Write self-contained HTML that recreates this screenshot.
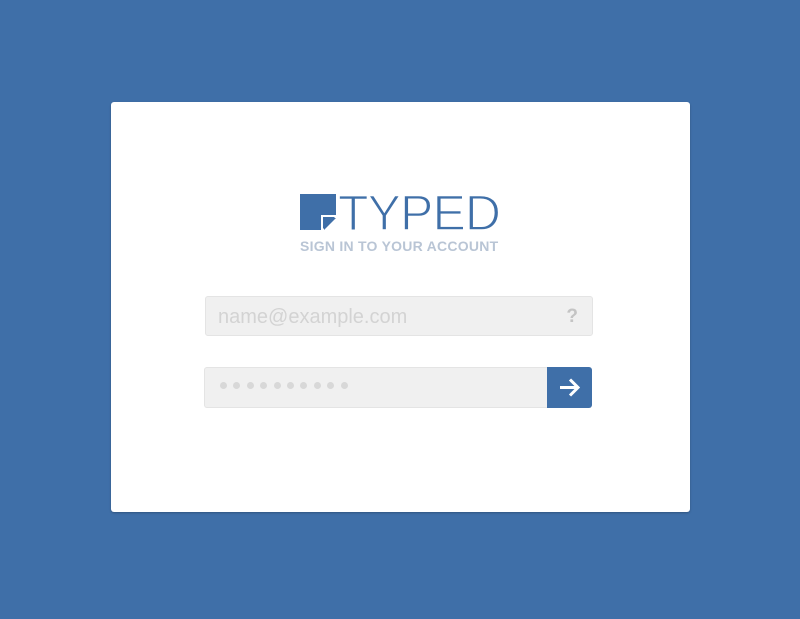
<!DOCTYPE html>
<html><head><style>
body{margin:0;width:800px;height:619px;background:#3f6fa8;position:relative;overflow:hidden;font-family:"Liberation Sans",sans-serif}
.card{position:absolute;left:111px;top:102px;width:579px;height:410px;background:#fff;border-radius:3px;box-shadow:0 1px 2px rgba(0,0,0,.25)}
.logo{position:absolute;left:300px;top:194px}
.typed{position:absolute;left:336px;top:185px}
.sub{position:absolute;left:300px;top:238px;font-size:14px;font-weight:bold;color:#b9c5d5;letter-spacing:0.25px;white-space:nowrap}
.f1{position:absolute;left:205px;top:296px;width:386px;height:38px;background:#f0f0f0;border:1px solid #e4e4e4;border-radius:3px}
.f1 span{position:absolute;left:12px;top:9px;font-size:20px;color:#d3d3d3}
.f1 b{position:absolute;right:14px;top:9px;font-size:19px;color:#c4c4c4}
.f2{position:absolute;left:204px;top:367px;width:343px;height:39px;background:#f0f0f0;border:1px solid #e4e4e4;border-right:none;border-radius:3px 0 0 3px}
.dots{position:absolute;left:15px;top:14px;line-height:7px}
.dots i{display:inline-block;width:7px;height:7px;border-radius:50%;background:#d8d8d8;margin-right:6.4px;vertical-align:top}
.btn{position:absolute;left:547px;top:367px;width:45px;height:41px;background:#3f6fa8;border-radius:0 3px 3px 0}
</style></head><body>
<div class="card"></div>
<svg class="logo" width="37" height="37" viewBox="0 0 37 37"><path d="M0 0H36V22L22 36H0Z" fill="#3f6fa8"/><path d="M24 24H36L24 36Z" fill="#3f6fa8"/><path d="M22 36V22H36" fill="none" stroke="#fff" stroke-width="2"/></svg>
<svg class="typed" width="170" height="50" viewBox="0 0 170 50"><text x="2" y="45" font-family="Liberation Sans" font-size="50" fill="#3f6fa8" stroke="#fff" stroke-width="1.4" letter-spacing="-1" textLength="162" lengthAdjust="spacing">TYPED</text></svg>
<div class="sub">SIGN IN TO YOUR ACCOUNT</div>
<div class="f1"><span>name@example.com</span><b>?</b></div>
<div class="f2"><div class="dots"><i></i><i></i><i></i><i></i><i></i><i></i><i></i><i></i><i></i><i></i></div></div>
<div class="btn"><svg width="45" height="41" viewBox="0 0 45 41"><path d="M13 20.5H31M23 12.5L31 20.5L23 28.5" fill="none" stroke="#fff" stroke-width="3"/></svg></div>
</body></html>
